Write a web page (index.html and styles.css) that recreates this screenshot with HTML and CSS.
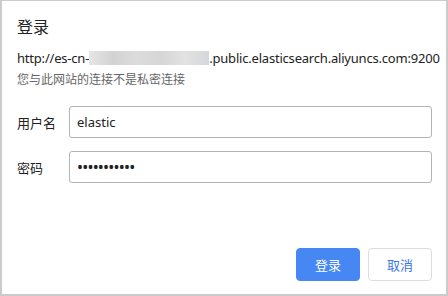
FILE: index.html
```html
<!DOCTYPE html>
<html>
<head>
    <meta http-equiv="Content-Type" content="text/html; charset=UTF-8">
    <title>登录</title>
    <link rel="stylesheet" href="styles.css">
</head>
<body>
<div class="dialog">
    <div class="title">登录</div>
    <div class="url">http://es-cn-<span class="blur"></span>.public.elasticsearch.aliyuncs.com:9200</div>
    <div class="warn">您与此网站的连接不是私密连接</div>
    <div class="form">
        <div class="row">
            <label class="label">用户名</label>
            <div class="field">elastic</div>
        </div>
        <div class="row">
            <label class="label">密码</label>
            <div class="field pass">•••••••••••</div>
        </div>
    </div>
    <div class="buttons">
        <button class="btn primary">登录</button>
        <button class="btn">取消</button>
    </div>
</div>
</body>
</html>
```

FILE: styles.css
```css
body{margin:0; font-family:"Noto Sans","Noto Sans CJK SC",sans-serif; color:#222;}
.dialog{
    width:448px; height:296px; box-sizing:border-box;
    border:2px solid #cbcbcb; border-top-width:1px;
    padding:14px 14px 13px 15px;
    display:flex; flex-direction:column;
}
.title{font-size:16px; line-height:24px; margin-bottom:10px;}
.url{font-size:13px; line-height:18px; white-space:nowrap; letter-spacing:-0.2px;}
.blur{
    display:inline-block; width:120px; height:14px; vertical-align:-2px;
    background:linear-gradient(90deg,#e6e6e6,#d2d2d2 20%,#dcdcdc 40%,#d6d6d6 60%,#e2e2e2 80%,#d4d8dc);
}
.warn{font-size:12px; line-height:18px; color:#666; margin-top:4px;}
.form{margin-top:17px; display:flex; flex-direction:column; gap:13px;}
.row{display:flex; align-items:center;}
.label{width:52px; font-size:13px;}
.field{
    flex:1; height:32px; box-sizing:border-box;
    border:1px solid #b4b4b4; border-radius:3px;
    padding:0 7px; font-size:13px; line-height:30px;
}
.pass{letter-spacing:-0.8px; font-size:16px;}
.buttons{margin-top:auto; display:flex; justify-content:flex-end; gap:8px;}
.btn{
    width:64px; height:33px; box-sizing:border-box;
    border:1px solid #dadce0; border-radius:4px; background:#fff;
    color:#3b78e7; font-family:inherit; font-size:13px;
}
.btn.primary{background:#4687f4; border-color:#4687f4; color:#fff;}
```
